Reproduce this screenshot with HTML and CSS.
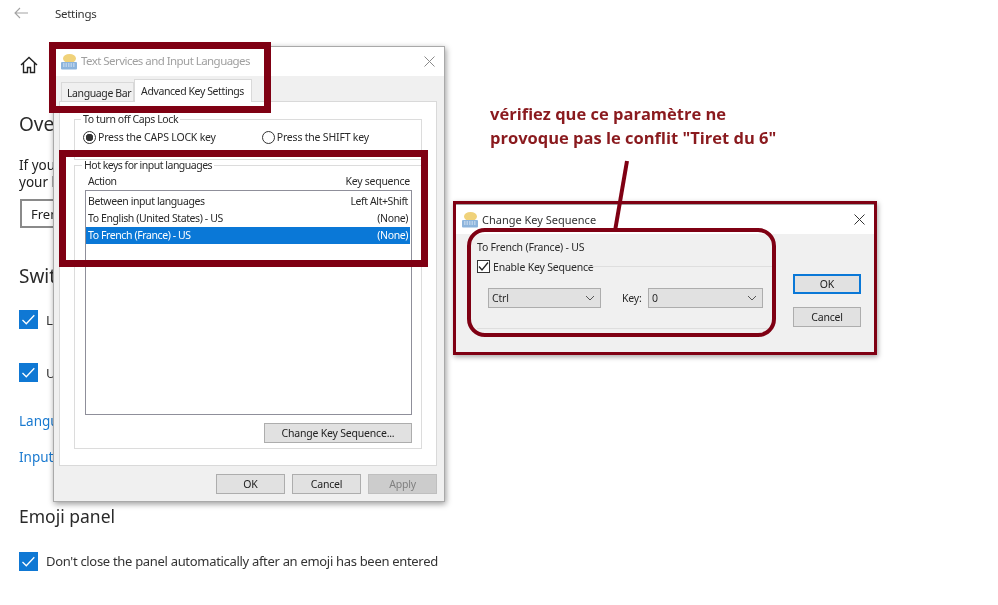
FILE: index.html
```html
<!DOCTYPE html>
<html lang="fr">
<head>
<meta charset="utf-8">
<title>Settings</title>
<link rel="stylesheet" href="styles.css">
</head>
<body>
<main class="settings">
  <header class="topbar">
    <svg class="back" width="14" height="12" viewBox="0 0 14 12"><path d="M6 1 1 6l5 5M1 6h13" fill="none" stroke="#a3a3a3" stroke-width="1.1"/></svg>
    <span>Settings</span>
  </header>
  <svg class="home" width="18" height="18" viewBox="0 0 18 18"><path d="M1 9 9 1.5 17 9M3.5 7v9.500h4v-5h3v5h4V7" fill="none" stroke="#222" stroke-width="1.400"/></svg>
  <h2 class="h-over">Ove</h2>
  <p class="para">If you<br>your l</p>
  <div class="field">Fren</div>
  <h2 class="h-swit">Swit</h2>
  <div class="check c1"><span class="box"><svg width="19" height="19" viewBox="0 0 19 19"><path d="m3.500 10 3.800 3.800 8-8.500" fill="none" stroke="#fff" stroke-width="1.300"/></svg></span><span>L</span></div>
  <div class="check c2"><span class="box"><svg width="19" height="19" viewBox="0 0 19 19"><path d="m3.500 10 3.800 3.800 8-8.500" fill="none" stroke="#fff" stroke-width="1.300"/></svg></span><span>U</span></div>
  <a class="link l1">Langu</a>
  <a class="link l2">Input</a>
  <h2 class="h-emoji">Emoji panel</h2>
  <div class="check c3"><span class="box"><svg width="19" height="19" viewBox="0 0 19 19"><path d="m3.500 10 3.800 3.800 8-8.500" fill="none" stroke="#fff" stroke-width="1.300"/></svg></span><span class="long">Don't close the panel automatically after an emoji has been entered</span></div>
</main>

<section class="win main-win">
  <div class="titlebar">
    <svg class="kbd" width="18" height="18" viewBox="0 0 18 18"><ellipse cx="9.500" cy="5.500" rx="6.500" ry="4.500" fill="#f0d27a"/><rect x="1" y="9" width="16" height="7.500" rx="1" fill="#8db4dc"/><path d="M3 11h12M3 13h12" stroke="#e6eef8" stroke-dasharray="1.500 1"/></svg>
    <span class="ttl-dim">Text Services and Input Languages</span>
    <svg class="close" width="11" height="11" viewBox="0 0 11 11"><path d="m.5.500 10 10m0-10-10 10" stroke="#8a8a8a"/></svg>
  </div>
  <div class="tabs">
    <span class="tab">Language Bar</span>
    <span class="tab active">Advanced Key Settings</span>
  </div>
  <div class="page">
    <fieldset class="grp grp-caps">
      <legend>To turn off Caps Lock</legend>
      <div class="radios">
        <label class="radio"><span class="dot on"></span>Press the CAPS LOCK key</label>
        <label class="radio"><span class="dot"></span>Press the SHIFT key</label>
      </div>
    </fieldset>
    <fieldset class="grp grp-hot">
      <legend>Hot keys for input languages</legend>
      <div class="cols"><span>Action</span><span class="seq">Key sequence</span></div>
      <div class="list">
        <div class="row"><span>Between input languages</span><span>Left Alt+Shift</span></div>
        <div class="row"><span>To English (United States) - US</span><span>(None)</span></div>
        <div class="row sel"><span>To French (France) - US</span><span>(None)</span></div>
      </div>
      <div class="change-row"><button class="btn change">Change Key Sequence...</button></div>
    </fieldset>
  </div>
  <div class="actions">
    <button class="btn act">OK</button>
    <button class="btn act">Cancel</button>
    <button class="btn act off">Apply</button>
  </div>
</section>
<div class="mark m1"></div>
<div class="mark m2"></div>

<p class="note">vérifiez que ce paramètre ne<br>provoque pas le conflit "Tiret du 6"</p>

<section class="win key-win">
  <div class="titlebar small">
    <svg class="kbd" width="18" height="18" viewBox="0 0 18 18"><ellipse cx="9.500" cy="5.500" rx="6.500" ry="4.500" fill="#f0d27a"/><rect x="1" y="9" width="16" height="7.500" rx="1" fill="#8db4dc"/><path d="M3 11h12M3 13h12" stroke="#e6eef8" stroke-dasharray="1.500 1"/></svg>
    <span>Change Key Sequence</span>
    <svg class="close" width="11" height="11" viewBox="0 0 11 11"><path d="m.5.500 10 10m0-10-10 10" stroke="#333"/></svg>
  </div>
  <div class="key-body">
    <div class="key-left">
      <div class="key-lang">To French (France) - US</div>
      <div class="key-group">
        <div class="enable"><span class="cb"><svg width="13" height="13" viewBox="0 0 13 13"><path d="m2 6.500 3 3.500 6-7.500" fill="none" stroke="#222" stroke-width="1.300"/></svg></span>Enable Key Sequence</div>
        <div class="combos">
          <div class="combo c-mod">Ctrl<svg width="10" height="6" viewBox="0 0 10 6"><path d="m1 1 4 4 4-4" fill="none" stroke="#555"/></svg></div>
          <span class="key-lbl">Key:</span>
          <div class="combo c-key">0<svg width="10" height="6" viewBox="0 0 10 6"><path d="m1 1 4 4 4-4" fill="none" stroke="#555"/></svg></div>
        </div>
      </div>
    </div>
    <div class="key-btns">
      <button class="btn kb default">OK</button>
      <button class="btn kb">Cancel</button>
    </div>
  </div>
</section>
<svg class="pointer" width="20" height="72" viewBox="0 0 20 72"><path d="M15 1 3 71" stroke="#7f0013" stroke-width="4"/></svg>
<div class="mark round"></div>
</body>
</html>
```
FILE: styles.css
```css
* { box-sizing: border-box; }
html, body { margin: 0; height: 605px; overflow: hidden; background: #fff; }
body { position: relative; font-family: "Noto Sans", "Open Sans", sans-serif; color: #222; filter: blur(0.3px); }

.settings { padding-left: 19px; width: 440px; font-size: 13.5px; }
.topbar { display: flex; align-items: center; height: 26px; font-size: 11.5px; letter-spacing: -.3px; color: #333; }
.back { margin-left: -5px; margin-right: 27px; }
.home { display: block; margin: 30px 0 0 1px; }
.settings h2 { margin: 0; font-weight: 400; font-size: 19px; line-height: 26px; color: #2a2a2a; }
.h-over { padding-top: 37px; }
.para { margin: 20px 0 0; line-height: 17px; }
.field { width: 60px; height: 29px; margin: 8px 0 0 1px; padding: 4px 9px; border: 2px solid #8a8a8a; font-size: 13px; }
.h-swit { margin-top: 35px !important; }
.check { display: flex; align-items: center; gap: 8px; font-size: 13.2px; color: #333; }
.long { white-space: nowrap; font-size: 13px; letter-spacing: -.31px; margin-top: -2px; }
.box { display: block; width: 19px; height: 19px; background: #0f78d4; line-height: 0; flex: none; }
.c1 { margin-top: 21px; }
.c2 { margin-top: 34px; }
.link { display: block; color: #1a7ad0; font-size: 13.5px; line-height: 18px; }
.l1 { margin-top: 30px; }
.l2 { margin-top: 18px; }
.h-emoji { margin-top: 37px !important; margin-left: -1px; font-size: 17.5px !important; }
.c3 { margin-top: 23px; }

.win { position: absolute; background: #f0f0f0; font-size: 10.5px; color: #2a2a2a; letter-spacing: -.4px; }
.main-win { left: 53px; top: 46px; width: 392px; height: 456px; border: 1px solid #a9a9a9; box-shadow: 1px 2px 6px rgba(0,0,0,.4); display: flex; flex-direction: column; }
.titlebar { display: flex; align-items: center; height: 29px; padding: 0 9px 0 6px; background: #fff; flex: none; font-size: 11.5px; }
.titlebar .kbd { margin-right: 3px; }
.titlebar .close { margin-left: auto; }
.ttl-dim { color: #a0a0a0; letter-spacing: -.55px; margin-top: -2px; }
.tabs { display: flex; align-items: flex-end; height: 25px; padding-left: 7px; flex: none; }
.tab { height: 19px; padding: 3px 2px 0 5px; background: #f0f0f0; border: 1px solid #d9d9d9; border-bottom: 0; white-space: nowrap; }
.tab.active { height: 23px; padding: 4px 7px 0 6px; background: #fff; margin-bottom: -1px; position: relative; }
.page { margin: 0 7px 0 5px; height: 365px; padding: 11px 14px 0; background: #fff; border: 1px solid #d9d9d9; }
.grp { margin: 0; padding: 0; border: 1px solid #dcdcdc; min-width: 0; }
.grp legend { margin-left: 6px; padding: 0 2px; line-height: 12px; white-space: nowrap; }
.grp-caps { height: 47px; }
.radios { display: flex; padding: 5px 0 0 8px; gap: 46px; letter-spacing: -.2px; }
.radio { display: flex; align-items: center; gap: 2px; }
.dot { display: block; width: 13px; height: 13px; border: 1px solid #333; border-radius: 50%; background: #fff; }
.dot.on { background: radial-gradient(circle, #333 3.500px, #fff 4px); }
.grp-hot { height: 290px; margin-top: -6px; position: relative; top: 5px; padding: 0 9px 0 10px; }
.grp-hot legend { margin-left: -3px; letter-spacing: -.5px; }
.cols { display: flex; justify-content: space-between; padding: 3px 2px 0 3px; line-height: 14px; }
.seq { letter-spacing: -.25px; }
.list { height: 225px; margin-top: 2px; padding: 2px 0 0; background: #fff; border: 1px solid #8f8f9a; }
.row { display: flex; justify-content: space-between; height: 17px; padding: 0 2px 0 2px; margin-right: 1px; line-height: 17px; }
.row.sel { background: #0a78d7; color: #fff; }
.change-row { display: flex; justify-content: flex-end; margin-top: 8px; }
.btn { display: block; margin: 0; padding: 0; font: inherit; letter-spacing: -.2px; color: #222; background: #e1e1e1; border: 1px solid #adadad; }
.change { width: 148px; height: 20px; }
.actions { display: flex; justify-content: flex-end; gap: 7px; padding: 8px 7px 0 0; }
.act { width: 69px; height: 20px; }
.off { background: #cccccc; border-color: #bfbfbf; color: #808080; }

.note { position: absolute; left: 490px; top: 102px; margin: 0; font: 700 16.5px/24px "Open Sans", sans-serif; color: #8a1a1e; white-space: nowrap; }

.key-win { left: 453px; top: 201px; width: 424px; height: 154px; border: 3px solid #7f0013; box-shadow: 1px 2px 5px rgba(0,0,0,.35); display: flex; flex-direction: column; letter-spacing: -.2px; }
.titlebar.small { height: 30px; padding: 0 9px 0 5px; font-size: 11px; letter-spacing: 0; border-top: 1px solid #a0a0a0; }
.titlebar.small span { color: #333; }
.key-body { display: flex; flex: 1; padding: 6px 13px 0 21px; }
.key-left { width: 297px; }
.key-lang { line-height: 14px; }
.key-group { position: relative; height: 72px; margin-top: 3px; border-right: 1px solid #dedede; border-bottom: 1px solid #dedede; }
.key-group::before { content: ""; position: absolute; left: 110px; right: 0; top: 9px; border-top: 1px solid #dedede; }
.enable { display: flex; align-items: center; gap: 3px; height: 19px; }
.cb { display: block; width: 13px; height: 13px; border: 1px solid #333; background: #fff; line-height: 0; }
.cb svg { margin: -1px; }
.combos { display: flex; align-items: center; margin: 12px 0 0 11px; }
.combo { display: flex; align-items: center; justify-content: space-between; height: 20px; padding: 0 5px 0 3px; background: #e1e1e1; border: 1px solid #adadad; }
.c-mod { width: 113px; }
.c-key { width: 115px; }
.key-lbl { width: 47px; padding-left: 21px; }
.key-btns { display: flex; flex-direction: column; gap: 13px; margin: 34px 0 0 auto; }
.kb { width: 68px; height: 20px; }
.default { border: 2px solid #0a78d7; }

.mark { position: absolute; border: 7px solid #7f0013; pointer-events: none; }
.m1 { left: 49px; top: 42px; width: 222px; height: 71px; }
.m2 { left: 59px; top: 150px; width: 369px; height: 117px; }
.round { left: 467px; top: 228px; width: 309px; height: 109px; border-width: 4px; border-radius: 18px; }
.pointer { position: absolute; left: 612px; top: 160px; }
```
